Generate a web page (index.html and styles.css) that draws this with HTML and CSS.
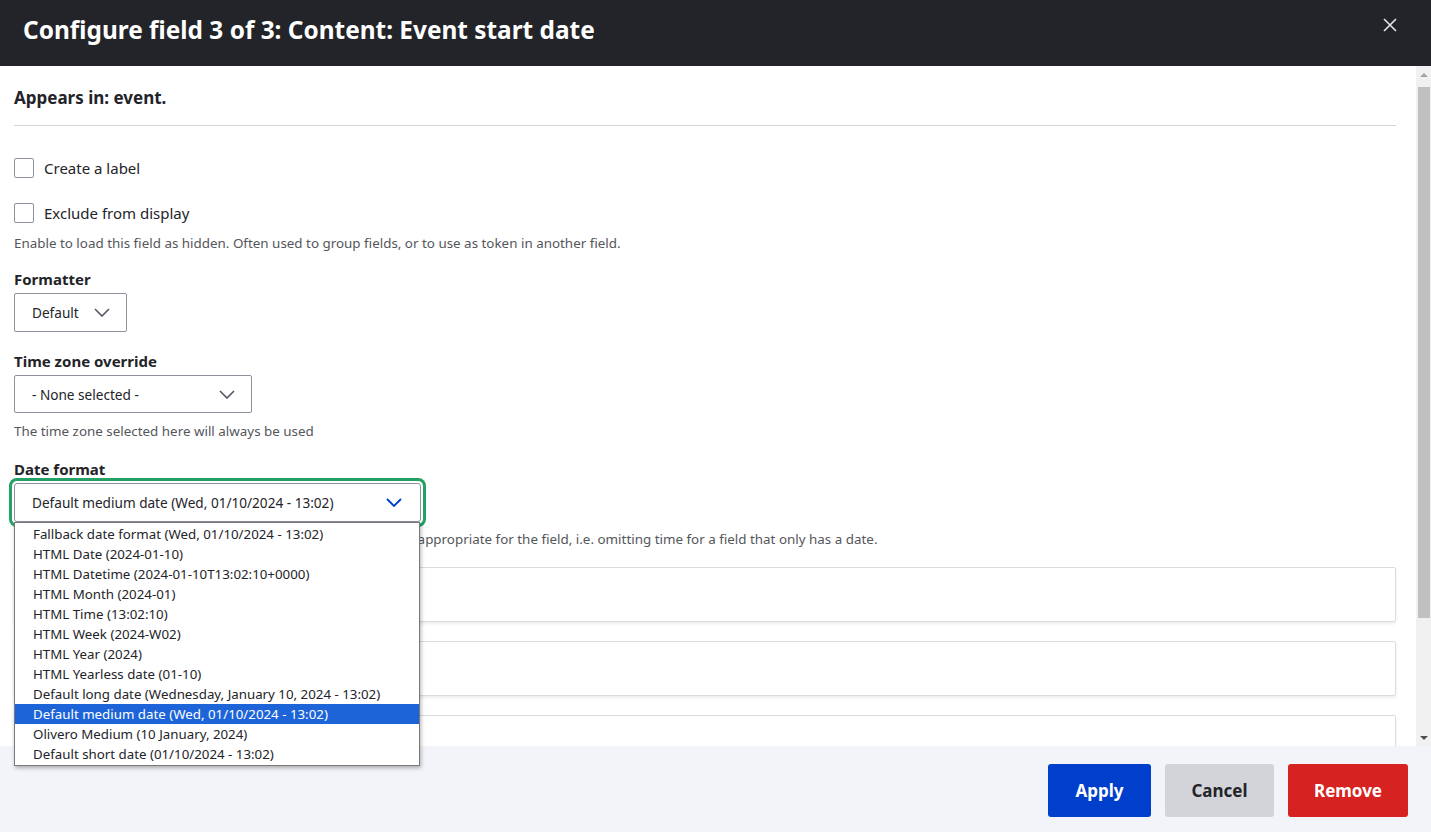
FILE: index.html
```html
<!DOCTYPE html>
<html lang="en">
<head>
<meta charset="utf-8">
<title>Configure field</title>
<link rel="stylesheet" href="styles.css">
</head>
<body>
<div class="dialog">
  <header class="titlebar">
    <h1 class="title">Configure field 3 of 3: Content: Event start date</h1>
    <button class="close" aria-label="Close">
      <svg width="14" height="14" viewBox="0 0 14 14"><path d="M1 1L13 13M13 1L1 13" stroke="#e6e6ea" stroke-width="1.6" fill="none"/></svg>
    </button>
  </header>
  <div class="main">
    <div class="content">
      <div class="appears">Appears in: event.</div>
      <hr class="rule">
      <label class="check first"><span class="box"></span><span class="check-label">Create a label</span></label>
      <label class="check second"><span class="box"></span><span class="check-label">Exclude from display</span></label>
      <div class="desc d1">Enable to load this field as hidden. Often used to group fields, or to use as token in another field.</div>

      <div class="field-label fl1">Formatter</div>
      <div class="select sel-formatter"><span>Default</span>
        <svg class="chev" width="16" height="9" viewBox="0 0 16 9"><path d="M1 1L8 8L15 1" stroke="#545560" stroke-width="1.6" fill="none"/></svg>
      </div>

      <div class="field-label fl2">Time zone override</div>
      <div class="select sel-tz"><span>- None selected -</span>
        <svg class="chev" width="16" height="9" viewBox="0 0 16 9"><path d="M1 1L8 8L15 1" stroke="#545560" stroke-width="1.6" fill="none"/></svg>
      </div>
      <div class="desc d2">The time zone selected here will always be used</div>

      <div class="field-label fl3">Date format</div>
      <div class="select-wrap">
        <div class="select sel-date focused"><span>Default medium date (Wed, 01/10/2024 - 13:02)</span>
          <svg class="chev" width="16" height="9" viewBox="0 0 16 9"><path d="M1 1L8 8L15 1" stroke="#003ecc" stroke-width="1.8" fill="none"/></svg>
        </div>
        <ul class="listbox">
          <li>Fallback date format (Wed, 01/10/2024 - 13:02)</li>
          <li>HTML Date (2024-01-10)</li>
          <li>HTML Datetime (2024-01-10T13:02:10+0000)</li>
          <li>HTML Month (2024-01)</li>
          <li>HTML Time (13:02:10)</li>
          <li>HTML Week (2024-W02)</li>
          <li>HTML Year (2024)</li>
          <li>HTML Yearless date (01-10)</li>
          <li>Default long date (Wednesday, January 10, 2024 - 13:02)</li>
          <li class="selected">Default medium date (Wed, 01/10/2024 - 13:02)</li>
          <li>Olivero Medium (10 January, 2024)</li>
          <li>Default short date (01/10/2024 - 13:02)</li>
        </ul>
      </div>
      <div class="desc d3">Choose a format for displaying the date. Be sure to set a format appropriate for the field, i.e. omitting time for a field that only has a date.</div>

      <div class="details"></div>
      <div class="details"></div>
      <div class="details"></div>
    </div>
    <div class="scrollbar">
      <div class="sb-arrow up"></div>
      <div class="sb-track"><div class="sb-thumb"></div></div>
      <div class="sb-arrow down"></div>
    </div>
  </div>
  <footer class="actions">
    <button class="btn apply">Apply</button>
    <button class="btn cancel">Cancel</button>
    <button class="btn remove">Remove</button>
  </footer>
</div>
</body>
</html>
```
FILE: styles.css
```css
html, body {
  margin: 0;
  padding: 0;
}
body {
  font-family: "Noto Sans", "Open Sans", sans-serif;
  color: #232429;
  background: #fff;
}
.dialog {
  width: 1431px;
  height: 832px;
  display: flex;
  flex-direction: column;
  overflow: hidden;
}
.titlebar {
  height: 66px;
  flex: none;
  background: #232429;
  display: flex;
  align-items: center;
  justify-content: space-between;
  padding: 0 34px 0 23px;
  box-sizing: border-box;
}
.title {
  margin: 0;
  color: #fff;
  font-size: 24.4px;
  font-weight: 700;
  position: relative;
  top: -4px;
}
.close {
  background: none;
  border: 0;
  padding: 0;
  width: 14px;
  height: 14px;
  display: flex;
  position: relative;
  top: -8px;
}
.main {
  flex: 1;
  display: flex;
  min-height: 0;
}
.content {
  flex: 1;
  padding: 0 20px 0 14px;
  min-width: 0;
}
.appears {
  font-weight: 700;
  font-size: 17px;
  line-height: 22px;
  margin-top: 21px;
}
.rule {
  border: 0;
  border-top: 1px solid #d4d4d8;
  margin: 16px 0 0;
  height: 0;
}
.check {
  display: flex;
  align-items: center;
  height: 20px;
}
.check.first { margin-top: 32px; }
.check.second { margin-top: 25px; }
.box {
  width: 18px;
  height: 18px;
  border: 1px solid #8e929c;
  border-radius: 2px;
  flex: none;
}
.check-label {
  margin-left: 10px;
  font-size: 15px;
}
.desc {
  font-size: 13.4px;
  color: #55565b;
  line-height: 18px;
  white-space: nowrap;
}
.d1 { margin-top: 11px; }
.field-label {
  font-weight: 700;
  font-size: 15px;
  line-height: 20px;
}
.fl1 { margin-top: 17px; }
.fl2 { margin-top: 19px; }
.fl3 { margin-top: 19px; }
.select {
  margin-top: 4px;
  height: 39px;
  box-sizing: border-box;
  border: 1px solid #8e929c;
  border-radius: 2px;
  display: flex;
  align-items: center;
  justify-content: space-between;
  padding: 0 16px 0 17px;
  font-size: 13.6px;
  background: #fff;
}
.sel-formatter { width: 113px; }
.sel-tz { width: 238px; height: 38px; }
.d2 { margin-top: 9px; }
.select-wrap {
  position: relative;
  width: 407px;
}
.sel-date {
  width: 407px;
  box-shadow: 0 0 0 2px #fff, 0 0 0 5px #26a166;
  border-radius: 3px;
  padding-right: 18px;
}
.listbox {
  position: absolute;
  left: 0;
  top: 39px;
  width: 406px;
  box-sizing: border-box;
  margin: 0;
  padding: 1px 0 0;
  list-style: none;
  background: #fff;
  border: 1px solid #7a7a7a;
  box-shadow: 1px 2px 4px rgba(0, 0, 0, 0.3);
  z-index: 5;
  font-size: 13.3px;
  height: 244px;
}
.listbox li {
  height: 20px;
  line-height: 20px;
  padding-left: 18px;
  color: #232429;
  white-space: nowrap;
}
.listbox li.selected {
  background: #1c64d7;
  color: #fff;
}
.d3 { margin-top: 8px; }
.details {
  height: 55px;
  box-sizing: border-box;
  border: 1px solid #dcdcde;
  border-radius: 2px;
  box-shadow: 0 2px 3px rgba(0, 0, 0, 0.07);
  margin-top: 19px;
  background: #fff;
}
.details:first-of-type { margin-top: 18px; }
.scrollbar {
  width: 15px;
  flex: none;
  background: #f1f1f1;
  display: flex;
  flex-direction: column;
}
.sb-arrow {
  height: 17px;
  flex: none;
  display: flex;
  align-items: center;
  justify-content: center;
}
.sb-arrow.up::before {
  content: "";
  border-left: 4px solid transparent;
  border-right: 4px solid transparent;
  border-bottom: 4px solid #a3a3a3;
}
.sb-arrow.down::before {
  content: "";
  border-left: 4px solid transparent;
  border-right: 4px solid transparent;
  border-top: 4px solid #505050;
}
.sb-track {
  flex: 1;
  padding: 4px 1px 0 2px;
}
.sb-thumb {
  height: 531px;
  background: #c1c1c1;
}
.actions {
  position: relative;
  z-index: 1;
  height: 86px;
  flex: none;
  background: #f3f4f9;
  display: flex;
  justify-content: flex-end;
  align-items: flex-start;
  gap: 14px;
  padding: 18px 23px 0 0;
  box-sizing: border-box;
}
.btn {
  height: 53px;
  border: 0;
  border-radius: 3px;
  font-family: "Noto Sans", "Open Sans", sans-serif;
  font-weight: 700;
  font-size: 17px;
  padding: 0;
}
.apply { width: 103px; background: #003ecc; color: #fff; }
.cancel { width: 109px; background: #d3d4d9; color: #232429; }
.remove { width: 120px; background: #d72222; color: #fff; }
```
